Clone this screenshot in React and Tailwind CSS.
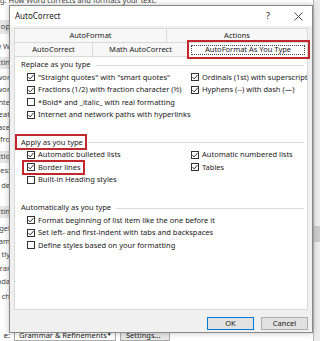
import React from 'react';

const Check = ({ on }) => (
  <span className="w-[8px] h-[8px] border border-[#333] bg-white flex items-center justify-center shrink-0">
    {on && (
      <svg width="6" height="6" viewBox="0 0 6 6">
        <path d="M0.4 3 L2.2 4.9 L5.6 0.9" fill="none" stroke="#222" strokeWidth="0.9" />
      </svg>
    )}
  </span>
);

const Row = ({ on, label }) => (
  <div className="flex items-center gap-[3px] h-[12.5px] whitespace-nowrap">
    <Check on={on} />
    <span>{label}</span>
  </div>
);

const Header = ({ children }) => (
  <div className="flex items-center h-[12px] pl-[6px] pr-[3px] whitespace-nowrap">
    {children}
    <div className="flex-1 h-px bg-[#dadada] ml-[5px]" />
  </div>
);

const Mark = ({ className }) => (
  <span className={'absolute border-2 border-[#c0282e] pointer-events-none ' + className} />
);

export default function App() {
  return (
    <div className="relative w-[320px] h-[341px] overflow-hidden bg-white text-[#222]" style={{ fontFamily: '"Noto Sans", "Open Sans", sans-serif' }}>
      {/* page behind the dialog */}
      <div className="flex h-full">
        <div className="flex flex-col w-[313px] text-[7.5px] text-[#444]">
          <div className="h-[10px] -mt-[4px] flex items-center whitespace-nowrap">g: How Word corrects and formats your text.</div>
          <div className="h-[14px] mt-[14px] bg-[#e6e6e6] flex items-center justify-end w-[10px] overflow-hidden whitespace-nowrap">op</div>
          <div className="h-[12px] mt-[7px] flex items-center justify-end w-[10px] overflow-hidden whitespace-nowrap">w W</div>
          <div className="h-[12px] mt-[4px] bg-[#e6e6e6] flex items-center justify-end w-[10px] overflow-hidden whitespace-nowrap">ctin</div>
          <div className="h-[12px] mt-[3px] flex items-center justify-end w-[10px] overflow-hidden whitespace-nowrap">wor</div>
          <div className="h-[12px] flex items-center justify-end w-[10px] overflow-hidden whitespace-nowrap">wor</div>
          <div className="h-[12px] mt-[1px] flex items-center justify-end w-[10px] overflow-hidden whitespace-nowrap">Inte</div>
          <div className="h-[12px] flex items-center justify-end w-[10px] overflow-hidden whitespace-nowrap">eat</div>
          <div className="h-[12px] mt-[1px] flex items-center justify-end w-[10px] overflow-hidden whitespace-nowrap">ace</div>
          <div className="h-[12px] flex items-center justify-end w-[10px] overflow-hidden whitespace-nowrap">fro</div>
          <div className="h-[12px] mt-[6px] bg-[#e6e6e6] flex items-center justify-end w-[10px] overflow-hidden whitespace-nowrap">ictio</div>
          <div className="h-[12px] mt-[2px] flex items-center justify-end w-[10px] overflow-hidden whitespace-nowrap">les:</div>
          <div className="h-[12px] mt-[3px] flex items-center justify-end w-[10px] overflow-hidden whitespace-nowrap">de</div>
          <div className="h-[12px] mt-[14px] bg-[#e6e6e6] flex items-center justify-end w-[10px] overflow-hidden whitespace-nowrap">ctin</div>
          <div className="h-[12px] mt-[5px] flex items-center justify-end w-[10px] overflow-hidden whitespace-nowrap">gel</div>
          <div className="h-[12px] mt-[1px] flex items-center justify-end w-[10px] overflow-hidden whitespace-nowrap">ram</div>
          <div className="h-[12px] mt-[1px] flex items-center justify-end w-[10px] overflow-hidden whitespace-nowrap">tly</div>
          <div className="h-[12px] mt-[2px] flex items-center justify-end w-[10px] overflow-hidden whitespace-nowrap">rar</div>
          <div className="h-[12px] mt-[1px] flex items-center justify-end w-[10px] overflow-hidden whitespace-nowrap">ada</div>
          <div className="h-[12px] mt-[3px] flex items-center justify-end w-[10px] overflow-hidden whitespace-nowrap">ch</div>
          <div className="h-[12px] mt-[27px] flex items-center whitespace-nowrap text-[#222]">
            <span className="w-[10px] flex justify-end overflow-hidden">e:</span>
            <span className="ml-[4px] w-[102px] h-[11px] border border-[#aaa] flex items-center justify-between px-[4px]">
              <span>Grammar &amp; Refinements</span>
              <span className="text-[5px]">▼</span>
            </span>
            <span className="ml-[4px] w-[50px] h-[11px] border border-[#aaa] bg-[#e8e8e8] flex items-center pl-[5px]">Settings...</span>
          </div>
        </div>
        <div className="w-[7px] h-full bg-[#ececec] border-l border-[#b8b8b8] flex flex-col">
          <div className="mt-[226px] h-[16px] bg-[#cdcdcd]" />
        </div>
      </div>

      {/* AutoCorrect dialog */}
      <div className="absolute left-[9px] top-[5px] w-[304px] h-[328px] border border-[#8a8a8a] bg-[#f0f0f0] shadow-[0_0_6px_rgba(0,0,0,0.25)] flex flex-col text-[7.5px] text-[#1a1a1a]">
        <div className="h-[20px] bg-white flex items-center pl-[5px]">
          <span className="text-[8px]">AutoCorrect</span>
          <span className="ml-auto w-[10px] text-center text-[9px]">?</span>
          <span className="ml-[20px] mr-[9px] w-[10px] flex justify-center">
            <svg width="9" height="9" viewBox="0 0 9 9">
              <path d="M0.5 0.5 L8.5 8.5 M8.5 0.5 L0.5 8.5" stroke="#222" strokeWidth="0.8" />
            </svg>
          </span>
        </div>
        <div className="mt-[2px] px-[4px] flex flex-col">
          <div className="flex h-[14px]">
            <div className="w-[152px] border-t border-l border-[#d9d9d9] bg-[#f7f7f7] flex items-center justify-center">AutoFormat</div>
            <div className="flex-1 border-t border-x border-[#d9d9d9] bg-[#f7f7f7] flex items-center justify-center">Actions</div>
          </div>
          <div className="flex h-[15px]">
            <div className="w-[78px] border-t border-l border-b border-[#d9d9d9] bg-[#f7f7f7] flex items-center justify-center">AutoCorrect</div>
            <div className="w-[96px] border-t border-l border-b border-[#d9d9d9] bg-[#f7f7f7] flex items-center justify-center">Math AutoCorrect</div>
            <div className="relative flex-1 border-t border-x border-[#d9d9d9] bg-white p-[2px] flex">
              <span className="flex-1 border border-dotted border-[#444] flex items-center justify-center">AutoFormat As You Type</span>
              <Mark className="-left-[2px] -top-[3px] -right-[3px] -bottom-[2px]" />
            </div>
          </div>
        </div>
        <div className="mx-[4px] h-[253px] bg-white border border-t-0 border-[#d9d9d9] flex flex-col pt-[2px]">
          <Header>Replace as you type</Header>
          <div className="grid grid-cols-[164px_1fr] pl-[12px]">
            <Row on label={'"Straight quotes" with "smart quotes"'} />
            <Row on label="Ordinals (1st) with superscript" />
            <Row on label="Fractions (1/2) with fraction character (½)" />
            <Row on label="Hyphens (--) with dash (—)" />
            <Row label={'*Bold* and _italic_ with real formatting'} />
            <div />
            <Row on label="Internet and network paths with hyperlinks" />
            <div />
          </div>
          <div className="mt-[15.5px]">
            <Header>
              <span className="relative">
                Apply as you type
                <Mark className="-left-[6px] -top-[3px] -right-[4px] -bottom-[2px]" />
              </span>
            </Header>
          </div>
          <div className="grid grid-cols-[164px_1fr] pl-[12px]">
            <Row on label="Automatic bulleted lists" />
            <Row on label="Automatic numbered lists" />
            <div className="flex">
              <span className="relative flex">
                <Row on label="Border lines" />
                <Mark className="-left-[5px] -top-[1px] -right-[4px] -bottom-[1px]" />
              </span>
            </div>
            <Row on label="Tables" />
            <Row label="Built-in Heading styles" />
            <div />
          </div>
          <div className="mt-[16px]">
            <Header>Automatically as you type</Header>
          </div>
          <div className="flex flex-col pl-[12px]">
            <Row on label="Format beginning of list item like the one before it" />
            <Row on label="Set left- and first-indent with tabs and backspaces" />
            <Row label="Define styles based on your formatting" />
          </div>
        </div>
        <div className="mt-[7px] flex justify-end gap-[7px] pr-[4px]">
          <div className="w-[47px] h-[13px] bg-[#e1e1e1] border border-[#0078d7] flex items-center justify-center">OK</div>
          <div className="w-[47px] h-[13px] bg-[#e1e1e1] border border-[#adadad] flex items-center justify-center">Cancel</div>
        </div>
      </div>
    </div>
  );
}
